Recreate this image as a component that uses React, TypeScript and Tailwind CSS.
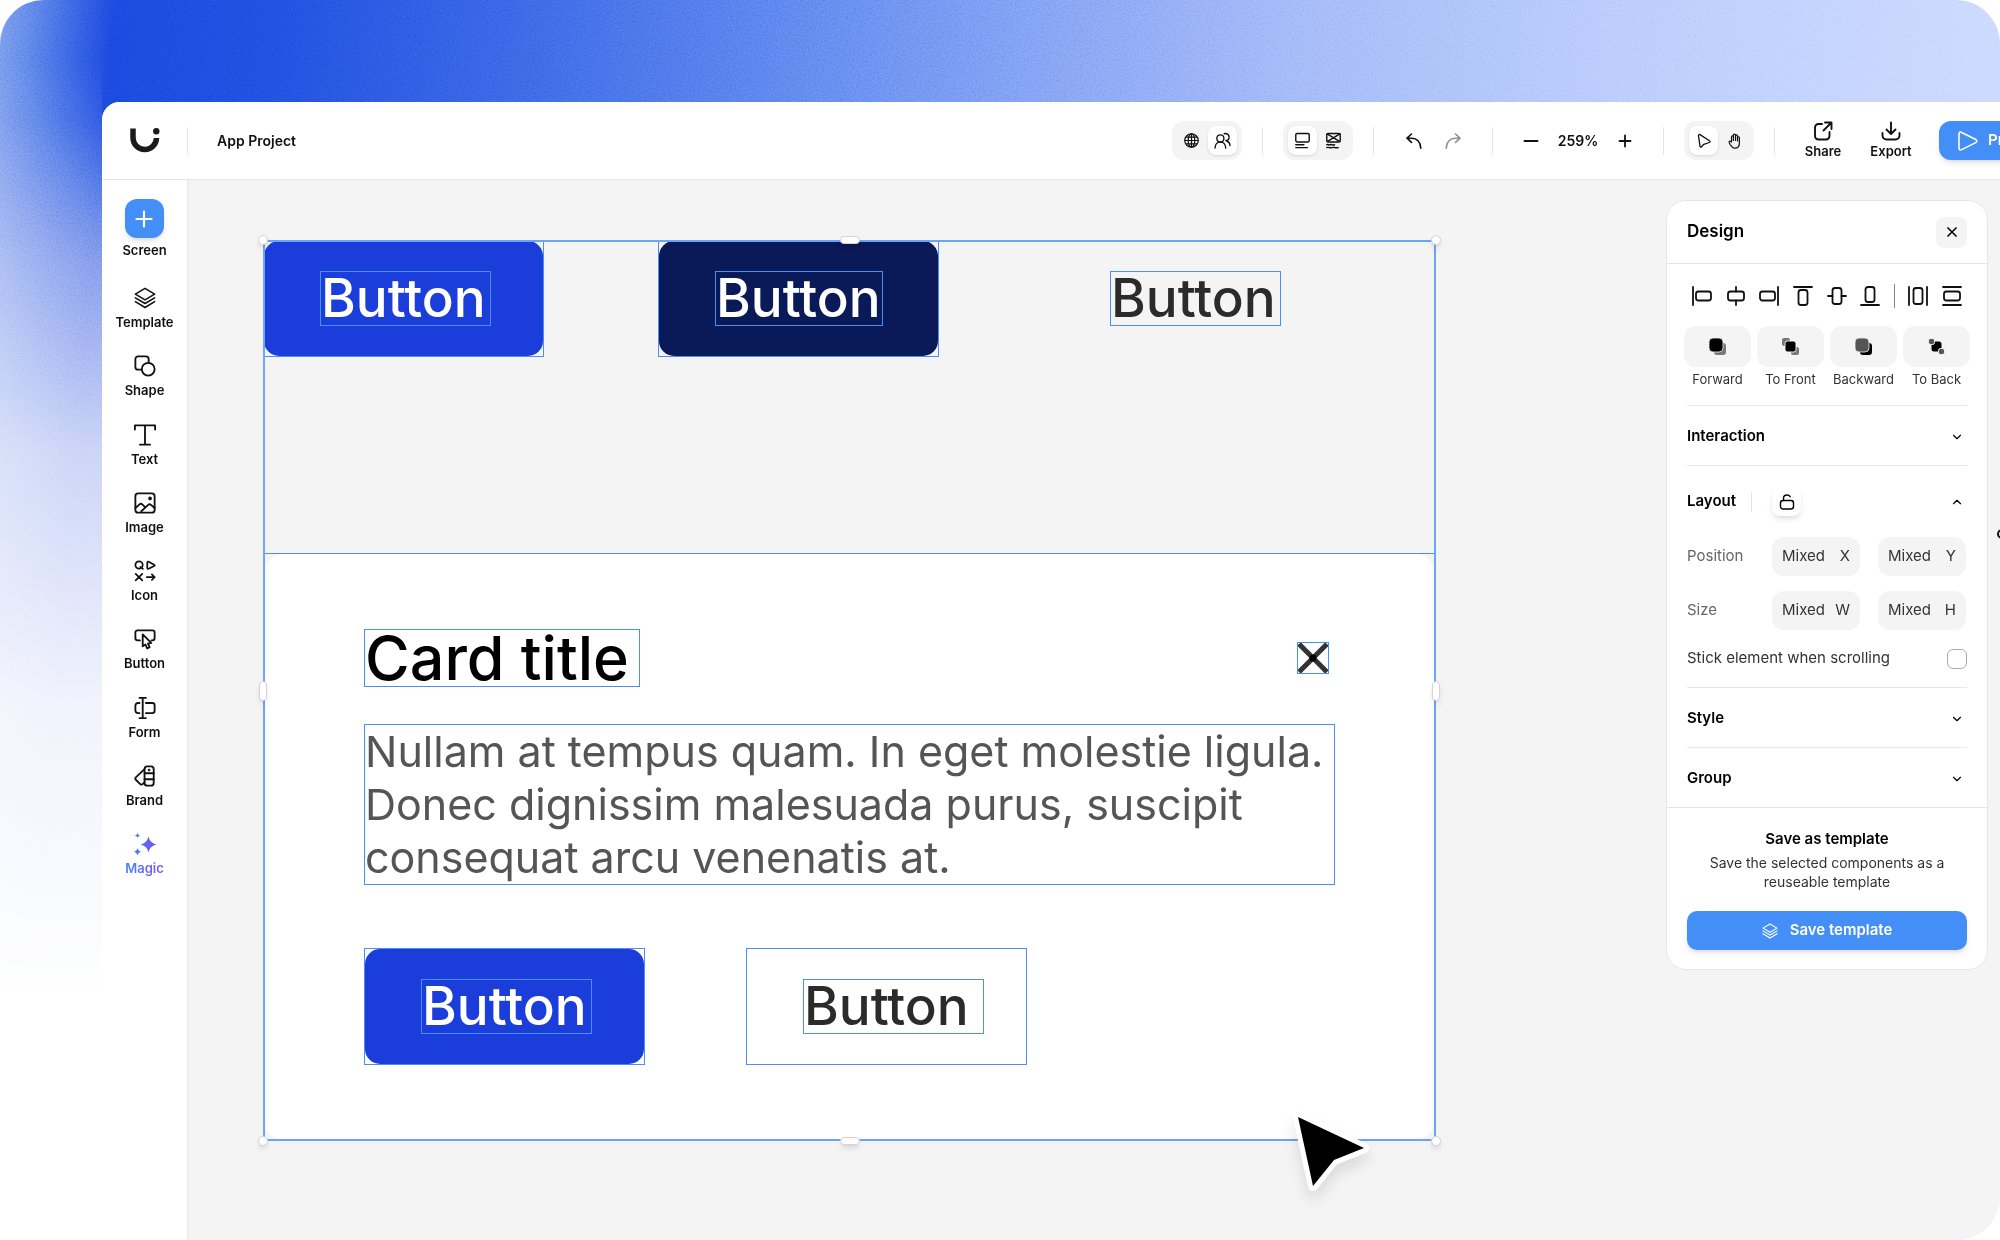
import { ReactNode, useState } from "react";
import { LuX, LuChevronDown, LuChevronUp } from "react-icons/lu";

const Svg = ({ className = "size-6", width = 1.6, box = "0 0 24 24", children }: any) => (
  <svg
    viewBox={box}
    className={className}
    fill="none"
    stroke="currentColor"
    strokeWidth={width}
    strokeLinecap="round"
    strokeLinejoin="round"
    aria-hidden="true"
  >
    {children}
  </svg>
);

const LayersIcon = ({ className }: any) => (
  <Svg className={className} width={1.7}>
    <path d="M12 1.5 22.5 7.7 12 14 1.5 7.7z" />
    <path d="M1.5 11.8 12 18 22.5 11.8M1.5 16 12 22.4 22.5 16" />
  </Svg>
);

// sidebar
const tools: { label: string; icon: ReactNode }[] = [
  { label: "Template", icon: <LayersIcon className="size-[22px]" /> },
  {
    label: "Shape",
    icon: (
      <Svg className="size-[22px]" width={2}>
        <path d="M8 16H4.500a3 3 0 0 1-3-3V4.500a3 3 0 0 1 3-3H13a3 3 0 0 1 3 3V8" />
        <circle cx="15.500" cy="15.500" r="7" />
      </Svg>
    ),
  },
  {
    label: "Text",
    icon: (
      <Svg className="size-[22px]" width={2}>
        <path d="M1 6V1.500h22V6M12 1.500v21M6.500 22.500h11" />
      </Svg>
    ),
  },
  {
    label: "Image",
    icon: (
      <Svg className="size-[22px]" width={2}>
        <rect x="1.500" y="1.500" width="21" height="21" rx="3" />
        <path d="M1.500 17.500 6 13.500c1-.9 2-.9 3 0l2.500 2.500M8 21l7.500-7c1-.9 2-.9 3 0l4 3.500" />
        <circle cx="17.500" cy="7" r="1" fill="currentColor" />
      </Svg>
    ),
  },
  {
    label: "Icon",
    icon: (
      <Svg className="size-[22px]" width={1.9}>
        <circle cx="5.500" cy="5.500" r="4" />
        <path d="M7 7.500 9.700 9.700" />
        <path d="M14.500 2.700v6c0 .9.700 1.200 1.500.9l6-3c.8-.4.800-1 0-1.500l-6-3.200c-.8-.4-1.500 0-1.500.800z" />
        <path d="M1.800 15.200 9 22.200M9 15.200 1.800 22.200M14 18.700h8.500M19.500 15.600l3 3.100-3 3.100" />
      </Svg>
    ),
  },
  {
    label: "Button",
    icon: (
      <Svg className="size-[22px]" width={2}>
        <path d="M6.500 13.500H4a2.500 2.500 0 0 1-2.500-2.500V5A2.500 2.500 0 0 1 4 2.500h16A2.500 2.500 0 0 1 22.500 5v6a2.500 2.500 0 0 1-2.500 2.500h-1" />
        <path d="M9.500 7v13l3-2 1.800 4.300 2.800-1.300-1.900-4 3.600-.8z" />
      </Svg>
    ),
  },
  {
    label: "Form",
    icon: (
      <Svg className="size-[22px]" width={2}>
        <path d="M6 1h7M6 23h7M9.500 1v22" />
        <path d="M6 6.500H4.500a3 3 0 0 0-3 3v5a3 3 0 0 0 3 3H6M13 6.500h7a2.500 2.500 0 0 1 2.500 2.500v6a2.500 2.500 0 0 1-2.500 2.500h-7" />
      </Svg>
    ),
  },
  {
    label: "Brand",
    icon: (
      <Svg className="size-[22px]" width={2}>
        <rect x="11.500" y="1.500" width="10" height="21" rx="3" />
        <path d="M11.500 9h10M11.500 15.500h10M11.500 4.500 2 13.500c-1 1-.8 1.800 0 2.600l4.500 4.600c1 1 2 .8 3 0l2-1.700" />
        <circle cx="16.500" cy="5.500" r=".5" fill="currentColor" />
      </Svg>
    ),
  },
];

const MagicIcon = () => (
  <svg viewBox="0 0 24 24" className="size-6" aria-hidden="true">
    <defs>
      <linearGradient id="magic" x1="0" y1="0" x2="1" y2="0">
        <stop offset="0" stopColor="#3b82f6" />
        <stop offset="1" stopColor="#7c4df5" />
      </linearGradient>
    </defs>
    <path
      fill="url(#magic)"
      d="M15.500 4.500c1.300 4.600 3 6.400 8 8-5 1.600-6.700 3.400-8 8-1.300-4.600-3-6.400-8-8 5-1.600 6.700-3.400 8-8zM4.500 1c.5 1.500 1 2 2.500 2.500C5.500 4 5 4.500 4.500 6 4 4.500 3.500 4 2 3.500 3.500 3 4 2.500 4.500 1zM4.500 16c.7 2.400 1.400 3 3.800 3.800-2.400.8-3.100 1.400-3.800 3.700-.7-2.300-1.400-2.900-3.700-3.700C3.100 19 3.800 18.400 4.500 16z"
    />
  </svg>
);

const Sidebar = () => (
  <aside className="flex w-[86px] shrink-0 flex-col items-center border-r border-[#e8e8e8] bg-white pt-[19px] text-[13px] leading-6 font-semibold text-[#111]">
    <button className="flex flex-col items-center">
      <span className="flex size-[39px] items-center justify-center rounded-xl bg-[#448ef8] text-white shadow-md">
        <Svg className="size-6" width={2.2}>
          <path d="M12 4.500v15M4.500 12h15" />
        </Svg>
      </span>
      Screen
    </button>
    <nav className="mt-6 flex h-[594px] flex-col justify-between">
      {tools.map((item) => (
        <button key={item.label} className="flex flex-col items-center">
          <span className="flex h-6 items-center">{item.icon}</span>
          {item.label}
        </button>
      ))}
      <button className="flex flex-col items-center">
        <MagicIcon />
        <span className="bg-linear-to-r from-[#3b82f6] to-[#7c4df5] bg-clip-text text-transparent">
          Magic
        </span>
      </button>
    </nav>
  </aside>
);

// top bar
const Divider = () => <span className="h-7 w-px bg-[#e6e6e6]" />;

const ToggleGroup = ({ active, items }: any) => (
  <div className="flex h-[39px] items-center gap-0.5 rounded-xl bg-[#f4f4f4] px-[5px]">
    {items.map((item: any, index: number) => (
      <button
        key={item.label}
        aria-label={item.label}
        className={
          index === active
            ? "flex size-[29px] items-center justify-center rounded-lg bg-white shadow-sm"
            : "flex size-[29px] items-center justify-center"
        }
      >
        {item.icon}
      </button>
    ))}
  </div>
);

const TopBar = () => (
  <header className="flex h-[78px] items-center border-b border-[#e6e6e6] bg-white pr-4 text-[#111]">
    <a href="#" aria-label="Home" className="flex w-[85px] justify-center">
      <svg viewBox="0 0 30 25" className="h-[25px] w-[30px]" fill="none" aria-hidden="true">
        <path
          d="M3 .5V9.500a11.500 11.500 0 0 0 23.500 0.500"
          stroke="#1a1a1a"
          strokeWidth="5.500"
        />
        <circle cx="26.300" cy="3.200" r="3.200" fill="#1a1a1a" />
      </svg>
    </a>
    <Divider />
    <span className="pl-[29px] text-sm font-semibold">App Project</span>

    <div className="ml-auto flex items-center gap-5">
      <ToggleGroup
        active={1}
        items={[
          {
            label: "Global",
            icon: (
              <svg viewBox="0 0 16 16" className="size-[15px]" fill="none" stroke="currentColor" strokeWidth="1.3">
                <circle cx="8" cy="8" r="7.200" />
                <ellipse cx="8" cy="8" rx="3.500" ry="7.200" />
                <path d="M8 .8v14.400M.8 8h14.400M2 4.500h12M2 11.500h12" />
              </svg>
            ),
          },
          {
            label: "Team",
            icon: (
              <Svg className="size-[17px]" width={2}>
                <circle cx="9" cy="9" r="5" />
                <path d="M1.500 22.500c0-5 3-8.500 7.500-8.500s7.500 3.500 7.500 8.500M14.500 2.500c3.500-1 6.800 1 6.800 4.500s-2.500 5-4.500 5M18 13c2.800.6 4.500 2.500 4.500 6" />
              </Svg>
            ),
          },
        ]}
      />
      <Divider />
      <ToggleGroup
        active={0}
        items={[
          {
            label: "Design view",
            icon: (
              <Svg className="size-[17px]" width={2}>
                <rect x="2.500" y="2" width="19" height="12" rx="2" />
                <path d="M2.500 18H14M2.500 22H19" />
              </Svg>
            ),
          },
          {
            label: "Wireframe view",
            icon: (
              <Svg className="size-[17px]" width={2}>
                <rect x="2.500" y="2" width="19" height="12" rx="2" />
                <path d="M3 2.500 21 13.500M21 2.500 3 13.500M2.500 18c2-1 3 1 5 0s3 1 6 0M2.500 22c3-1 4 1 7 0s5 1 9 0" />
              </Svg>
            ),
          },
        ]}
      />
      <Divider />
      <div className="flex">
        <button aria-label="Undo" className="flex w-[39px] justify-center">
          <Svg className="size-4" width={1.6} box="0 0 16 16">
            <path d="M5.500 1 1 5.200l4.500 4.200M1.200 5.200H5.500c5.500 0 9.300 4 9.300 10" />
          </Svg>
        </button>
        <button aria-label="Redo" className="flex w-[39px] justify-center text-[#8f8f8f]">
          <Svg className="size-4" width={1.6} box="0 0 16 16">
            <path d="M10.500 1 15 5.200l-4.500 4.200M14.800 5.200H10.500C5 5.200 1.200 9.200 1.200 15.200" />
          </Svg>
        </button>
      </div>
      <Divider />
      <div className="flex items-center text-sm font-semibold">
        <button aria-label="Zoom out" className="flex w-9 justify-center">
          <Svg className="size-4" width={2} box="0 0 16 16">
            <path d="M1.500 8h13" />
          </Svg>
        </button>
        <span className="w-[58px] text-center">259%</span>
        <button aria-label="Zoom in" className="flex w-9 justify-center">
          <Svg className="size-4" width={1.8} box="0 0 16 16">
            <path d="M2.500 8h11M8 2.500v11" />
          </Svg>
        </button>
      </div>
      <Divider />
      <ToggleGroup
        active={0}
        items={[
          {
            label: "Select",
            icon: (
              <Svg className="size-4" width={1.3} box="0 0 16 16">
                <path d="M2.500 2.800 4 13.200c.1.900.9 1.100 1.500.5l2.300-2.400 5.500-1.800c1-.4 1-1.200.2-1.700L4 1.600c-.8-.5-1.600.2-1.500 1.200z" />
              </Svg>
            ),
          },
          {
            label: "Hand",
            icon: (
              <Svg className="size-4" width={1.2} box="0 0 16 16">
                <path d="M4.500 9V3.800c0-1.400 1.900-1.400 1.900 0V7.500 2.200c0-1.500 2.100-1.500 2.100 0V7.500 3c0-1.400 2-1.400 2 0v5-3.200c0-1.400 1.900-1.400 1.900 0V10c0 3-1.500 5.200-4.400 5.200-2.500 0-3.500-1.300-4.700-3.400L2.200 9.500c-.5-1.200.8-1.900 1.500-1z" />
              </Svg>
            ),
          },
        ]}
      />
      <Divider />
      <div className="flex gap-3 text-[13px] leading-5 font-semibold">
        <button className="flex w-14 flex-col items-center">
          <Svg className="size-5" width={1.9} box="0 0 20 20">
            <path d="M9 3H5.500A3.500 3.500 0 0 0 2 6.500V15a3.500 3.500 0 0 0 3.500 3.500H13a3.500 3.500 0 0 0 3.500-3.500v-4" />
            <path d="M12 1.500h6.500V8M18 2 10.500 9.500" />
          </Svg>
          Share
        </button>
        <button className="flex w-14 flex-col items-center">
          <Svg className="size-5" width={1.9} box="0 0 20 20">
            <path d="M1.500 12v2.500a4 4 0 0 0 4 4h9a4 4 0 0 0 4-4V12M10 1.500V13M5.500 8.500 10 13l4.500-4.500" />
          </Svg>
          Export
        </button>
      </div>
      <button className="flex h-[39px] w-[125px] items-center gap-2.5 rounded-xl bg-[#448ef8] pl-[19px] text-[15px] font-semibold text-white shadow-md">
        <Svg className="size-5" width={1.6} box="0 0 20 20">
          <path d="M1 3v14c0 1.800 1.200 2.400 2.700 1.600l14-7c1.500-.8 1.500-2.300 0-3.100l-14-7C2.200.6 1 1.200 1 3z" />
        </Svg>
        Preview
      </button>
    </div>
  </header>
);

// artboard
const SampleButton = ({ frame = true, fill = "", color, textWidth = "w-[171px]" }: any) => (
  <div className={`h-[117px] w-[281px] border ${frame ? "border-[#4a8ff8]" : "border-transparent"}`}>
    <button
      className={`flex size-full items-center rounded-[15px] pl-[56px] text-[53px] leading-[53px] font-medium ${fill} ${color}`}
    >
      <span className={`border border-[#4a8ff8] text-left whitespace-nowrap ${textWidth}`}>
        Button
      </span>
    </button>
  </div>
);

const handles = [
  "-top-[5px] -left-[5px] size-2.5",
  "-top-[5px] -right-[5px] size-2.5",
  "-bottom-[5px] -left-[5px] size-2.5",
  "-bottom-[5px] -right-[5px] size-2.5",
  "-top-1 left-1/2 h-2 w-5 -translate-x-1/2",
  "-bottom-1 left-1/2 h-2 w-5 -translate-x-1/2",
  "top-1/2 -left-1 h-5 w-2 -translate-y-1/2",
  "top-1/2 -right-1 h-5 w-2 -translate-y-1/2",
];

const Artboard = () => (
  <div className="relative mt-[60px] w-[1173px] shrink-0">
    <div className="flex gap-[114px]">
      <SampleButton fill="bg-[#1b3edb]" color="text-white" />
      <SampleButton fill="bg-[#0a1957]" color="text-white" textWidth="w-[168px]" />
      <SampleButton frame={false} color="text-[#2b2b2b]" />
    </div>

    <div className="mt-[196px] border border-[#4a8ff8]">
      <div className="rounded-[20px] bg-white px-[100px] pt-[75px] pb-[75px]">
        <div className="flex items-center justify-between pr-1.5">
          <h2 className="w-[276px] border border-[#4a8ff8] text-[61px] leading-[56px] font-medium whitespace-nowrap text-black">
            Card title
          </h2>
          <button aria-label="Close card" className="size-8 border border-[#4a8ff8]">
            <svg viewBox="0 0 30 30" className="size-full" aria-hidden="true">
              <path d="M1 1 29 29M29 1 1 29" stroke="#333" strokeWidth="5" />
              <circle cx="15" cy="15" r="3.500" fill="#000" />
            </svg>
          </button>
        </div>
        <p className="mt-[37px] w-[971px] border border-[#4a8ff8] text-[43px] leading-[53px] whitespace-nowrap text-[#555]">
          Nullam at tempus quam. In eget molestie ligula.
          <br />
          Donec dignissim malesuada purus, suscipit
          <br />
          consequat arcu venenatis at.
        </p>
        <div className="mt-[63px] flex gap-[101px]">
          <SampleButton fill="bg-[#1b3edb]" color="text-white" />
          <SampleButton color="text-[#2b2b2b]" textWidth="w-[181px]" />
        </div>
      </div>
    </div>

    <div className="pointer-events-none absolute inset-0 border-2 border-[#6ba4f9]" />
    {handles.map((place) => (
      <span key={place} className={`absolute rounded-full border border-[#d4d4d4] bg-white shadow-md ${place}`} />
    ))}

    <svg
      viewBox="0 0 84 84"
      className="absolute -bottom-[53px] left-[1027px] size-[84px] overflow-visible drop-shadow-xl"
      aria-hidden="true"
    >
      <path
        d="M8 7 74 38 44 50 23 76z"
        fill="#000"
        stroke="#fff"
        strokeWidth="10"
        strokeLinejoin="round"
        paintOrder="stroke"
      />
    </svg>
  </div>
);

// design panel
const alignIcons = [
  { label: "Align left", d: "M1 1v18", r: [4, 5.5, 15, 9] },
  { label: "Align center", d: "M10 1v4.500M10 14.500V19", r: [2, 5.5, 16, 9] },
  { label: "Align right", d: "M19 1v18", r: [1, 5.5, 15, 9] },
  { label: "Align top", d: "M1 1h18", r: [5.5, 4, 9, 15] },
  { label: "Align middle", d: "M1 10h4.500M14.500 10H19", r: [5.5, 2, 9, 16] },
  { label: "Align bottom", d: "M1 19h18", r: [5.5, 1, 9, 15] },
  { label: "Distribute horizontally", d: "M1 1v18M19 1v18", r: [5.5, 2, 9, 16] },
  { label: "Distribute vertically", d: "M1 1h18M1 19h18", r: [2, 5.5, 16, 9] },
];

const layerActions = [
  {
    label: "Forward",
    icon: (
      <>
        <rect x="6" y="6" width="12" height="12" rx="3" fill="#777" />
        <rect x="1" y="1" width="14" height="14" rx="4" fill="#000" stroke="#f4f4f4" strokeWidth=".8" />
      </>
    ),
  },
  {
    label: "To Front",
    icon: (
      <>
        <rect x="1" y="1" width="8" height="8" rx="2" fill="#777" />
        <rect x="10" y="10" width="8" height="8" rx="2" fill="#777" />
        <rect x="4" y="4" width="11" height="11" rx="2.500" fill="#000" stroke="#f4f4f4" />
      </>
    ),
  },
  {
    label: "Backward",
    icon: (
      <>
        <rect x="6" y="6" width="12" height="12" rx="3" fill="#000" />
        <rect x="1" y="1" width="14" height="14" rx="4" fill="#555" stroke="#f4f4f4" strokeWidth=".8" />
      </>
    ),
  },
  {
    label: "To Back",
    icon: (
      <>
        <rect x="4.500" y="4.500" width="10" height="10" rx="2.500" fill="#000" />
        <rect x="1.500" y="1.500" width="6" height="6" rx="2" fill="#555" stroke="#f4f4f4" />
        <rect x="11.500" y="11.500" width="6" height="6" rx="2" fill="#555" stroke="#f4f4f4" />
      </>
    ),
  },
];

const AlignButton = ({ icon }: any) => (
  <button aria-label={icon.label}>
    <Svg className="size-5" width={1.8} box="0 0 20 20">
      <path d={icon.d} />
      <rect x={icon.r[0]} y={icon.r[1]} width={icon.r[2]} height={icon.r[3]} rx="2.5" />
    </Svg>
  </button>
);

const Section = ({ title }: { title: string }) => (
  <button className="flex h-[59px] w-full items-center justify-between pt-0.5 pr-[3px] text-[15px] font-semibold text-black">
    {title}
    <LuChevronDown size={14} />
  </button>
);

const Field = ({ name, unit }: { name: string; unit: string }) => (
  <label className="flex h-[39px] w-[88px] items-center justify-between rounded-xl bg-[#f4f4f4] px-2.5">
    <input
      defaultValue="Mixed"
      aria-label={`${name} ${unit}`}
      className="w-[46px] bg-transparent text-[15px] text-[#333] outline-none"
    />
    <span className="text-[#333]">{unit}</span>
  </label>
);

const DesignPanel = () => {
  const [sticky, setSticky] = useState(false);

  return (
    <section className="mt-5 mr-[92px] ml-auto w-[322px] shrink-0 rounded-[20px] border border-[#e6e6e6] bg-white text-[15px] text-[#333]">
      <div className="flex h-[63px] items-center justify-between border-b border-[#e6e6e6] px-5">
        <h1 className="text-[17px] font-semibold text-black">Design</h1>
        <button aria-label="Close" className="flex size-[31px] items-center justify-center rounded-lg bg-[#f4f4f4] text-black">
          <LuX size={16} strokeWidth={2.5} />
        </button>
      </div>

      <div className="px-5">
        <div className="flex h-11 items-center justify-between px-[5px] pt-5 text-[#111]">
          {alignIcons.slice(0, 6).map((icon) => (
            <AlignButton key={icon.label} icon={icon} />
          ))}
          <span className="h-6 w-px bg-[#888]" />
          {alignIcons.slice(6).map((icon) => (
            <AlignButton key={icon.label} icon={icon} />
          ))}
        </div>
        <div className="-mx-[3px] mt-[18px] grid grid-cols-4 gap-1.5 pb-3.5">
          {layerActions.map((action) => (
            <button key={action.label} className="flex flex-col items-center text-[13px] leading-6">
              <span className="flex h-[41px] w-full items-center justify-center rounded-xl bg-[#f4f4f4]">
                <svg viewBox="0 0 19 19" className="size-[19px]" aria-hidden="true">
                  {action.icon}
                </svg>
              </span>
              {action.label}
            </button>
          ))}
        </div>

        <div className="border-y border-[#e8e8e8]">
          <Section title="Interaction" />
        </div>

        <div className="flex h-[71px] items-center pr-[3px] text-black">
          <span className="w-16 font-semibold">Layout</span>
          <span className="h-5 w-px bg-[#e3e3e3]" />
          <button aria-label="Unlock layout" className="ml-5 flex size-[29px] items-center justify-center rounded-lg bg-white shadow-md">
            <Svg className="size-4" width={1.4} box="0 0 16 16">
              <rect x="1.500" y="6.500" width="13" height="8.500" rx="2.500" />
              <path d="M4.500 6.500V4.500c0-2 1.300-3.500 3.500-3.500 1.500 0 2.600.6 3.200 1.800" />
            </Svg>
          </button>
          <LuChevronUp size={14} className="ml-auto" />
        </div>
        <div className="grid grid-cols-[85px_88px_88px] items-center gap-y-[15px]">
          <span className="text-[#666]">Position</span>
          <Field name="Position" unit="X" />
          <div className="ml-[18px]">
            <Field name="Position" unit="Y" />
          </div>
          <span className="text-[#666]">Size</span>
          <Field name="Size" unit="W" />
          <div className="ml-[18px]">
            <Field name="Size" unit="H" />
          </div>
        </div>
        <label className="flex h-[58px] items-center justify-between border-b border-[#e8e8e8]">
          Stick element when scrolling
          <input
            type="checkbox"
            checked={sticky}
            onChange={() => setSticky(!sticky)}
            className="size-5 appearance-none rounded-md border border-[#aaa] bg-white checked:bg-[#448ef8]"
          />
        </label>
        <div className="border-b border-[#e8e8e8]">
          <Section title="Style" />
        </div>
        <Section title="Group" />
      </div>

      <div className="border-t border-[#e6e6e6] px-5 pt-[19px] pb-[19px] text-center">
        <h3 className="leading-6 font-semibold text-black">Save as template</h3>
        <p className="mt-0.5 px-4 text-sm leading-[19px]">
          Save the selected components as a reuseable template
        </p>
        <button className="mt-5 flex h-[39px] w-full items-center justify-center gap-3 rounded-[10px] bg-[#448ef8] font-semibold text-white shadow-md">
          <LayersIcon className="size-4" />
          Save template
        </button>
      </div>
    </section>
  );
};

export default function App() {
  return (
    <div className="bg-white font-[Inter,'Liberation_Sans',sans-serif]">
      <div className="relative flex min-h-screen flex-col overflow-hidden rounded-tl-[44px] rounded-r-[44px] pt-[102px]">
        <div className="absolute inset-0 bg-[linear-gradient(95deg,#7595ec_0px,#3a62e3_70px,#1a43dd_115px,#1f4ade_280px,#355ee4_500px,#5a7eee_800px,#7b9bf4_1050px,#9cb4f8_1300px,#b3c7fc_1600px,#c8d6ff_2000px)]" />
        <div className="absolute inset-y-0 left-0 w-[102px] bg-[linear-gradient(180deg,rgba(255,255,255,0)_60px,rgba(255,255,255,0.08)_120px,rgba(255,255,255,0.42)_260px,rgba(255,255,255,0.75)_450px,rgba(255,255,255,0.93)_700px,#fff_1000px)]" />
        <svg className="absolute inset-0 size-full opacity-25 mix-blend-overlay" aria-hidden="true">
          <filter id="grain">
            <feTurbulence type="fractalNoise" baseFrequency="0.6" numOctaves="2" />
            <feColorMatrix type="matrix" values="1 0 0 0 0 1 0 0 0 0 1 0 0 0 0 0 0 0 0 1" />
          </filter>
          <rect width="100%" height="100%" filter="url(#grain)" />
        </svg>

        <div className="relative -mr-20 ml-[102px] flex flex-1 flex-col overflow-hidden rounded-tl-[18px] bg-white">
          <TopBar />
          <div className="flex flex-1">
            <Sidebar />
            <main className="flex flex-1 items-start bg-[#f4f4f4] pl-[75px]">
              <Artboard />
              <DesignPanel />
            </main>
          </div>
          <span className="absolute top-[427px] right-[73px] size-2.5 rounded-full border-2 border-[#111]" />
        </div>
      </div>
    </div>
  );
}
